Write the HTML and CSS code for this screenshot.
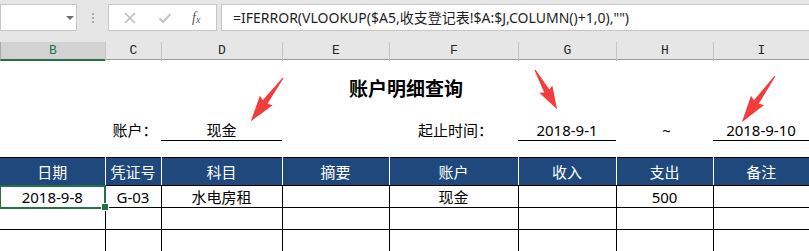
FILE: index.html
```html
<!DOCTYPE html>
<html lang="zh">
<head>
<meta charset="UTF-8">
<title>账户明细查询</title>
<link rel="stylesheet" href="styles.css">
</head>
<body>
<div class="toolbar">
  <div class="namebox"><span class="dd"></span></div>
  <div class="grip"><i></i><i></i><i></i></div>
  <div class="fbtns">
    <svg width="14" height="14" viewBox="0 0 14 14"><path d="M2 2L12 12M12 2L2 12" stroke="#bdbdbd" stroke-width="1.6" fill="none"/></svg>
    <svg width="14" height="14" viewBox="0 0 14 14"><path d="M1.5 7.5L5 11L12.5 3" stroke="#c4c4c4" stroke-width="2.2" fill="none"/></svg>
    <span class="fx">f<sub>x</sub></span>
  </div>
  <div class="formula">=IFERROR(VLOOKUP($A5,收支登记表!$A:$J,COLUMN()+1,0),"")</div>
</div>

<div class="colheads">
  <div class="sel">B</div><div>C</div><div>D</div><div>E</div><div>F</div><div>G</div><div>H</div><div>I</div>
</div>

<div class="sheet">
  <div class="title">账户明细查询</div>
  <div class="params">
    <div></div>
    <div class="lbl">账户：</div>
    <div class="val">现金</div>
    <div></div>
    <div class="lbl">起止时间：</div>
    <div class="val">2018-9-1</div>
    <div class="lbl">~</div>
    <div class="val">2018-9-10</div>
  </div>

  <table class="grid">
    <colgroup>
      <col style="width:105px"><col style="width:56px"><col style="width:121px"><col style="width:107px">
      <col style="width:129px"><col style="width:98px"><col style="width:97px"><col style="width:96px">
    </colgroup>
    <thead>
      <tr><th>日期</th><th>凭证号</th><th>科目</th><th>摘要</th><th>账户</th><th>收入</th><th>支出</th><th>备注</th></tr>
    </thead>
    <tbody>
      <tr><td class="active">2018-9-8</td><td>G-03</td><td>水电房租</td><td></td><td>现金</td><td></td><td>500</td><td></td></tr>
      <tr><td></td><td></td><td></td><td></td><td></td><td></td><td></td><td></td></tr>
      <tr><td></td><td></td><td></td><td></td><td></td><td></td><td></td><td></td></tr>
    </tbody>
  </table>
</div>

<svg class="arrows" width="809" height="251" viewBox="0 0 809 251">
  <g fill="#f23d3d">
    <polygon transform="translate(283,78) rotate(126.6)" points="0,-0.6 30,-3 28,-8 54,0 28,8 30,3 0,0.6"/>
    <polygon transform="translate(535,70) rotate(60.6)" points="0,-0.6 24,-3 22,-7.5 45,0 22,7.5 24,3 0,0.6"/>
    <polygon transform="translate(775,76) rotate(125.6)" points="0,-0.6 32,-3 30,-8 57,0 30,8 32,3 0,0.6"/>
  </g>
</svg>
</body>
</html>
```

FILE: styles.css
```css
* { margin:0; padding:0; box-sizing:border-box; }
body { width:809px; height:251px; overflow:hidden; position:relative; background:#fff; font-family:"Noto Sans","Noto Sans CJK SC",sans-serif; font-size:15px; color:#000; }

/* formula bar */
.toolbar { height:42px; background:#e6e6e6; display:flex; align-items:flex-start; padding-top:4px; }
.namebox { width:77px; height:27px; background:#fff; border:1px solid #c6c6c6; position:relative; }
.namebox .dd { position:absolute; left:65px; top:11px; border-left:4px solid transparent; border-right:4px solid transparent; border-top:4px solid #6d6d6d; }
.grip { width:31px; height:27px; display:flex; flex-direction:column; align-items:center; justify-content:center; gap:2px; }
.grip i { display:block; width:2px; height:2px; background:#a9a9a9; }
.fbtns { width:109px; height:27px; background:#fff; border:1px solid #c6c6c6; display:flex; align-items:center; padding-left:14px; gap:21px; }
.fx { font-family:"Liberation Serif",serif; font-style:italic; font-size:14px; color:#5a5a5a; margin-left:-1px; }
.fx sub { font-size:10px; vertical-align:-1px; }
.formula { flex:1; height:27px; margin-left:4px; background:#fff; border:1px solid #c6c6c6; border-right:none; padding-left:11px; line-height:25px; font-size:14px; color:#1e1e1e; white-space:nowrap; }

/* column headers */
.colheads { display:grid; grid-template-columns:105px 56px 121px 107px 129px 98px 97px 96px; height:18px; background:#e6e6e6; border-bottom:1px solid #9b9b9b; }
.colheads div { border-left:1px solid #c3c3c3; text-align:center; font-family:"Liberation Mono",monospace; font-size:13px; line-height:17px; color:#262626; }
.colheads div:first-child { border-left:1px solid #ababab; }
.colheads .sel { background:#d2d2d2; color:#217346; border-bottom:2px solid #217346; }

/* sheet */
.sheet { padding-top:17px; }
.title { height:24px; line-height:24px; text-align:center; font-size:19px; font-weight:bold; padding-left:3px; }
.params { display:grid; grid-template-columns:105px 56px 121px 107px 129px 98px 97px 96px; margin-top:18px; margin-bottom:16px; }
.params div { height:22px; line-height:22px; text-align:center; white-space:nowrap; }
.params .val { border-bottom:1px solid #000; }
.params .lbl { padding-left:4px; }

.grid { border-collapse:collapse; table-layout:fixed; width:809px; }
.grid th { height:28px; background:#1f497d; color:#fff; font-weight:normal; border-top:1px solid #000; border-right:1px solid #fff; border-bottom:1px solid #000; }
.grid th:last-child { border-right:none; }
.grid td { height:22px; border:1px solid #000; text-align:center; line-height:20px; padding:0; }
.grid td:first-child { border-left:none; }
.grid td.active { position:relative; outline:2px solid #217346; outline-offset:-1px; }
.grid td.active::after { content:""; position:absolute; right:-4px; bottom:-4px; width:6px; height:6px; background:#217346; border:1px solid #fff; }

.arrows { position:absolute; left:0; top:0; pointer-events:none; }
```
